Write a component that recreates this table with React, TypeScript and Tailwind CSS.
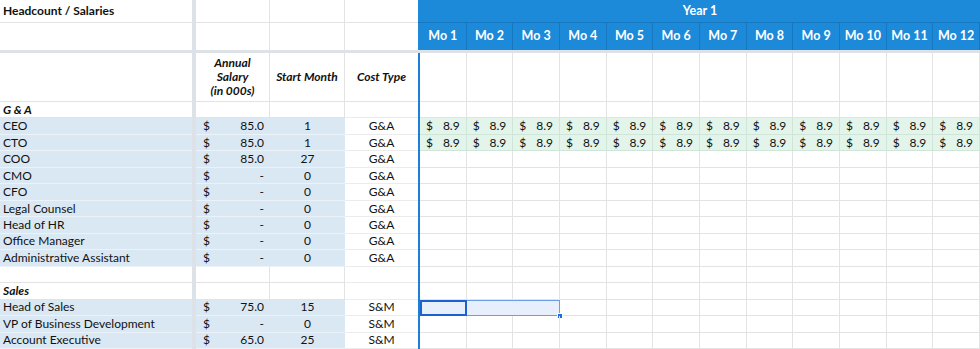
import React from "react";

type Row = {
  label: string;
  kind: "section" | "blank" | "item";
  salary?: string;
  start?: string;
  type?: string;
  monthly?: boolean;
  select?: boolean;
};

const months = Array.from({ length: 12 }, (_, i) => `Mo ${i + 1}`);

const rows: Row[] = [
  { label: "G & A", kind: "section" },
  { label: "CEO", kind: "item", salary: "85.0", start: "1", type: "G&A", monthly: true },
  { label: "CTO", kind: "item", salary: "85.0", start: "1", type: "G&A", monthly: true },
  { label: "COO", kind: "item", salary: "85.0", start: "27", type: "G&A" },
  { label: "CMO", kind: "item", salary: "-", start: "0", type: "G&A" },
  { label: "CFO", kind: "item", salary: "-", start: "0", type: "G&A" },
  { label: "Legal Counsel", kind: "item", salary: "-", start: "0", type: "G&A" },
  { label: "Head of HR", kind: "item", salary: "-", start: "0", type: "G&A" },
  { label: "Office Manager", kind: "item", salary: "-", start: "0", type: "G&A" },
  { label: "Administrative Assistant", kind: "item", salary: "-", start: "0", type: "G&A" },
  { label: "", kind: "blank" },
  { label: "Sales", kind: "section" },
  { label: "Head of Sales", kind: "item", salary: "75.0", start: "15", type: "S&M", select: true },
  { label: "VP of Business Development", kind: "item", salary: "-", start: "0", type: "S&M" },
  { label: "Account Executive", kind: "item", salary: "65.0", start: "25", type: "S&M" },
];

function Frozen() {
  return <div className="w-[4px] shrink-0 self-stretch bg-[#dde2e9]" />;
}

function BlueLine() {
  return <div className="w-[2px] shrink-0 self-stretch bg-[#1d7fd8]" />;
}

function DataRow({ row }: { row: Row }) {
  const item = row.kind === "item";
  const fill = item ? "bg-[#dae8f4] border-b border-[#ecf2f9]" : "bg-white border-b border-[#e3e3e3]";

  return (
    <div className="flex h-[16.47px] text-[12px] leading-none text-[#111]">
      <div className={`w-[192px] shrink-0 flex items-center pl-[3px] ${fill}`}>
        {row.kind === "section" ? <span className="font-bold italic">{row.label}</span> : row.label}
      </div>
      <Frozen />
      <div className={`w-[74px] shrink-0 flex items-center justify-between pl-[7px] pr-[6px] ${fill} ${item ? "" : "border-r border-r-[#e3e3e3]"}`}>
        {item && (
          <>
            <span>$</span>
            <span>{row.salary}</span>
          </>
        )}
      </div>
      <div className={`w-[75px] shrink-0 flex items-center justify-center ${fill} ${item ? "" : "border-r border-r-[#e3e3e3]"}`}>
        {item && row.start}
      </div>
      <div className="w-[73px] shrink-0 flex items-center justify-center border-b border-[#ececec]">
        {item && row.type}
      </div>
      <BlueLine />
      <div className="relative flex-1 grid grid-cols-12">
        {months.map((m) => (
          <div
            key={m}
            className={`flex items-center justify-between pl-[6px] pr-[6px] border-r border-b ${
              row.monthly ? "bg-[#e3f4ea] border-[#cfe5d8]" : "border-[#e3e3e3]"
            }`}
          >
            {row.monthly && (
              <>
                <span>$</span>
                <span>8.9</span>
              </>
            )}
          </div>
        ))}
        {row.select && (
          <>
            <div className="absolute left-0 top-0 h-full w-3/12 bg-[#e8effc] border border-[#6a9ee8]" />
            <div className="absolute left-0 top-0 h-full w-1/12 border-2 border-[#1b63cc]" />
            <div className="absolute left-[calc(25%-3px)] bottom-[-3px] w-[6px] h-[6px] bg-[#1b6fdc] border border-white" />
          </>
        )}
      </div>
    </div>
  );
}

export default function App() {
  return (
    <div className="w-[980px] h-[349px] overflow-hidden bg-white font-['Lato',sans-serif] text-[#111]">
      {/* Title row */}
      <div className="flex h-[23px] text-[12px]">
        <div className="w-[192px] shrink-0 flex items-center pl-[3px] font-bold border-b border-[#e3e3e3]">
          Headcount / Salaries
        </div>
        <Frozen />
        <div className="w-[74px] shrink-0 border-r border-b border-[#e3e3e3]" />
        <div className="w-[75px] shrink-0 border-r border-b border-[#e3e3e3]" />
        <div className="w-[73px] shrink-0 border-b border-[#e3e3e3]" />
        <div className="flex-1 flex items-center justify-center bg-[#1c89d9] border-b border-[#1778c2] text-white text-[12.5px] font-bold pl-[2px]">
          Year 1
        </div>
      </div>

      {/* Month labels */}
      <div className="flex h-[27px] text-[12.5px]">
        <div className="w-[192px] shrink-0" />
        <Frozen />
        <div className="w-[74px] shrink-0 border-r border-[#e3e3e3]" />
        <div className="w-[75px] shrink-0 border-r border-[#e3e3e3]" />
        <div className="w-[73px] shrink-0" />
        <div className="flex-1 grid grid-cols-12 bg-[#1c89d9] pl-[2px]">
          {months.map((m) => (
            <div key={m} className="flex items-center justify-center border-r border-[#1778c2] text-white font-bold">
              {m}
            </div>
          ))}
        </div>
      </div>

      {/* Frozen horizontal border */}
      <div className="h-[3px] bg-[#dde2e9]" />

      {/* Column headings */}
      <div className="flex h-[49px] text-[12px] font-bold italic">
        <div className="w-[192px] shrink-0 border-b border-[#e3e3e3]" />
        <Frozen />
        <div className="w-[74px] shrink-0 flex flex-col items-center justify-center leading-[14px] border-r border-b border-[#e3e3e3]">
          <span>Annual</span>
          <span>Salary</span>
          <span>(in 000s)</span>
        </div>
        <div className="w-[75px] shrink-0 flex items-center justify-center border-r border-b border-[#e3e3e3]">
          Start Month
        </div>
        <div className="w-[73px] shrink-0 flex items-center justify-center border-b border-[#e3e3e3]">
          Cost Type
        </div>
        <BlueLine />
        <div className="flex-1 grid grid-cols-12">
          {months.map((m) => (
            <div key={m} className="border-r border-b border-[#e3e3e3]" />
          ))}
        </div>
      </div>

      {rows.map((row, i) => (
        <DataRow key={i} row={row} />
      ))}
    </div>
  );
}
